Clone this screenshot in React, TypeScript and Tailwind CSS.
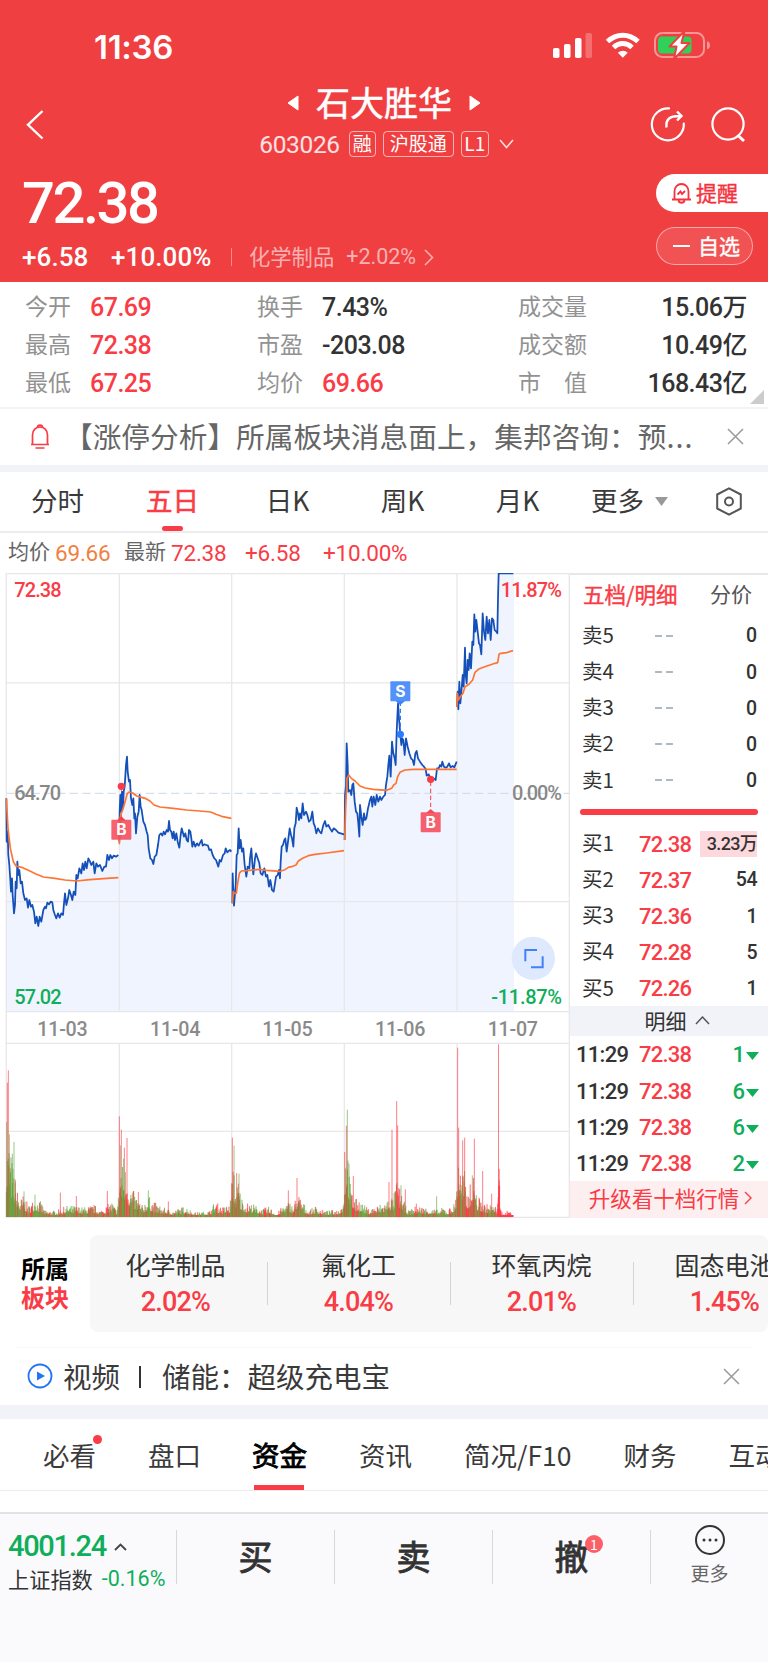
import React from 'react'
import clsx from 'clsx'

type Point = [number, number]

const numFont = "font-['Roboto','Noto_Sans_CJK_SC',sans-serif]"

const stats = [
  [
    { label: '今开', value: '67.69', up: true },
    { label: '最高', value: '72.38', up: true },
    { label: '最低', value: '67.25', up: true },
  ],
  [
    { label: '换手', value: '7.43%', up: false },
    { label: '市盈', value: '-203.08', up: false },
    { label: '均价', value: '69.66', up: true },
  ],
  [
    { label: '成交量', value: '15.06', unit: '万', up: false },
    { label: '成交额', value: '10.49', unit: '亿', up: false },
    { label: '市　值', value: '168.43', unit: '亿', up: false },
  ],
]

const periods = ['分时', '五日', '日K', '周K', '月K']

const asks = ['卖5', '卖4', '卖3', '卖2', '卖1']

const bids = [
  { label: '买1', price: '72.38', volume: '3.23万' },
  { label: '买2', price: '72.37', volume: '54' },
  { label: '买3', price: '72.36', volume: '1' },
  { label: '买4', price: '72.28', volume: '5' },
  { label: '买5', price: '72.26', volume: '1' },
]

const ticks = [1, 6, 6, 2]

const sectors = [
  { name: '化学制品', change: '2.02%' },
  { name: '氟化工', change: '4.04%' },
  { name: '环氧丙烷', change: '2.01%' },
  { name: '固态电池', change: '1.45%' },
]

const sections = ['必看', '盘口', '资金', '资讯', '简况/F10', '财务', '互动']

// Chart series, one string per trading day, in thirds of a pixel
const priceLines = [
  '19,700 20,830 23,800 25,870 28,900 31,945 33,980 36,940 38,990 42,1045 45,1020 47,950 50,970 52,890 55,930 58,915 62,955 66,950 70,985 75,1005 80,1000 84,1028 88,1005 93,1025 97,1020 102,1040 106,1075 110,1055 115,1083 119,1055 124,1070 130,1035 135,1025 138,1030 142,1013 147,1018 152,1010 157,1012 160,1035 165,1050 169,1060 174,1045 179,1058 184,1045 189,1050 192,1015 195,985 199,1020 204,1000 208,975 213,990 217,1005 221,980 226,990 229,930 233,940 238,910 244,925 248,895 252,915 256,890 260,910 265,880 270,890 274,900 280,890 284,925 289,895 294,905 300,900 307,918 313,905 318,905 322,870 327,885 331,870 336,880 341,872 348,875 355,870',
  '358,830 359,740 361,690 363,740 366,680 369,730 371,680 374,665 378,600 381,575 383,620 387,650 390,645 393,700 397,720 400,700 403,760 405,745 408,805 412,755 416,740 419,690 422,725 425,735 430,770 435,780 440,800 443,810 446,850 451,880 456,885 460,897 464,875 469,870 474,840 478,810 483,805 487,812 491,800 495,808 500,795 504,800 507,768 510,795 514,800 518,820 521,800 525,825 529,805 533,830 538,848 542,810 545,790 548,800 552,815 556,805 560,825 564,830 567,795 571,800 574,820 577,845 581,830 586,845 591,835 596,842 602,830 605,825 608,842 613,838 619,840 624,842 628,855 633,853 638,870 643,880 648,885 655,905 659,885 663,890 669,870 674,865 677,850 682,862 686,858 690,855 694,860',
  '697,1015 698,925 700,980 702,1022 705,985 707,960 710,870 713,865 716,790 719,850 722,825 726,860 730,850 734,900 739,935 743,905 748,910 750,880 754,850 757,895 760,928 765,880 768,865 773,880 778,895 782,925 787,930 793,910 798,935 802,930 807,965 811,945 816,975 821,980 825,955 828,935 833,930 837,915 840,940 842,890 845,845 849,840 853,825 856,820 860,860 864,830 869,790 873,810 876,820 880,845 883,790 887,775 890,728 894,745 897,765 900,745 904,760 908,715 912,750 918,740 922,750 927,770 932,765 937,740 941,775 945,785 949,805 954,790 959,800 964,805 970,780 975,768 979,785 985,780 990,790 996,800 1001,790 1008,795 1015,803 1022,805 1032,808',
  '1034,825 1035,690 1038,660 1040,535 1043,600 1045,680 1050,675 1054,690 1057,660 1060,655 1064,710 1068,740 1072,745 1075,775 1078,815 1080,720 1084,755 1088,780 1092,745 1095,765 1099,760 1104,730 1110,705 1114,695 1117,725 1121,695 1126,720 1130,690 1135,710 1140,695 1144,705 1150,695 1155,690 1158,660 1162,635 1165,600 1168,572 1172,635 1176,530 1180,565 1184,580 1187,600 1190,500 1194,415 1197,460 1201,508 1204,540 1207,520 1210,525 1214,570 1218,520 1223,545 1228,565 1233,580 1238,585 1242,600 1246,565 1250,558 1254,580 1260,590 1267,600 1272,605 1277,612 1280,632 1286,628 1292,643 1300,640 1307,645 1311,610 1316,610 1320,600 1324,605 1327,590 1332,605 1337,608 1342,605 1347,595 1352,607 1358,603 1363,607 1370,590',
  '1371,425 1373,380 1375,433 1378,350 1381,415 1385,370 1388,330 1391,365 1395,248 1397,330 1400,355 1403,285 1406,315 1409,265 1413,310 1417,230 1420,240 1423,148 1426,200 1429,165 1433,200 1437,235 1440,240 1444,268 1448,145 1452,200 1456,225 1460,155 1464,205 1468,165 1472,225 1476,160 1480,165 1484,195 1489,200 1492,205 1494,100 1496,25 1540,25',
]

const averageLines = [
  '19,700 24,790 31,850 40,890 48,903 65,907 85,916 108,927 130,936 165,940 195,945 230,948 270,944 310,941 355,938',
  '358,838 360,765 362,750 368,735 374,715 382,685 388,681 398,684 410,693 425,697 438,701 450,708 462,720 480,726 520,730 560,735 600,738 632,741 648,748 665,754 694,760',
  '697,1015 700,980 703,985 709,985 713,955 718,925 724,918 740,917 780,913 800,916 840,919 855,914 865,907 875,905 888,900 895,888 908,880 925,872 945,868 980,864 1032,857',
  '1034,825 1037,730 1041,640 1046,630 1054,640 1065,648 1080,663 1095,669 1120,673 1160,676 1175,670 1181,660 1188,655 1193,635 1200,622 1215,615 1240,613 1370,613',
  '1371,425 1372,385 1375,405 1381,395 1389,385 1395,365 1407,358 1418,345 1425,322 1435,313 1450,307 1470,300 1485,295 1493,293 1497,268 1502,265 1520,263 1539,257',
]

// Turnover envelope and the single bars that stand out of it
const volumeEnvelope: Point[] = [
  [19, 250], [28, 250], [34, 190], [41, 150], [46, 110], [52, 85], [60, 55], [72, 70], [85, 35], [105, 60],
  [125, 45], [135, 20], [170, 20], [200, 35], [229, 35], [250, 30], [283, 38], [300, 20], [337, 50], [350, 20],
  [357, 90], [361, 190], [371, 150], [380, 170], [386, 110], [400, 80], [415, 60], [425, 35], [445, 65], [465, 45],
  [487, 30], [520, 20], [557, 35], [580, 15], [600, 15], [630, 20], [645, 50], [665, 30], [690, 40], [695, 120],
  [702, 160], [706, 90], [717, 110], [722, 70], [735, 45], [760, 40], [785, 25], [808, 32], [830, 10], [848, 35],
  [870, 50], [880, 30], [891, 80], [910, 45], [925, 20], [948, 35], [970, 20], [990, 20], [1015, 25], [1030, 50],
  [1036, 220], [1042, 270], [1047, 150], [1052, 90], [1068, 55], [1076, 60], [1085, 45], [1105, 25], [1130, 35], [1160, 50],
  [1168, 70], [1180, 60], [1190, 120], [1198, 90], [1204, 80], [1215, 40], [1225, 20], [1250, 35], [1280, 30], [1320, 20],
  [1330, 35], [1340, 20], [1365, 45], [1371, 120], [1376, 268], [1381, 150], [1395, 140], [1400, 75], [1410, 100], [1417, 110],
  [1424, 150], [1430, 60], [1440, 60], [1450, 45], [1460, 40], [1475, 40], [1490, 30], [1496, 200], [1501, 30], [1510, 10],
  [1525, 22], [1535, 14], [1541, 5],
]

const redBars: Point[] = [
  [22, 403], [25, 440], [46, 112], [181, 73], [229, 63], [322, 78], [358, 302], [364, 262], [373, 208], [381, 237],
  [415, 75], [505, 47], [697, 238], [710, 132], [715, 100], [865, 80], [891, 117], [1034, 195], [1039, 274], [1060, 123],
  [1167, 105], [1176, 262], [1190, 348], [1193, 275], [1216, 83], [1249, 40], [1373, 508], [1376, 268], [1388, 230],
  [1394, 238], [1423, 235], [1448, 138], [1475, 70], [1495.5, 518], [1498, 110],
]

const greenBars: Point[] = [
  [20, 285], [28, 248], [37, 190], [42, 225], [72, 77], [105, 67], [361, 215], [371, 175], [445, 80], [702, 214],
  [717, 130], [1042, 322], [1047, 160], [1203, 95], [1310, 62], [1417, 125],
]

function buildVolume() {
  let seed = 7
  const rand = () => {
    seed = (seed * 16807) % 2147483647
    return seed / 2147483647
  }
  let i = 0
  let red = ''
  let green = ''
  for (let x = 19; x < 1540; x += 1.4) {
    while (i < volumeEnvelope.length - 2 && x > volumeEnvelope[i + 1][0]) i++
    const [x0, h0] = volumeEnvelope[i]
    const [x1, h1] = volumeEnvelope[i + 1]
    const top = h0 + ((h1 - h0) * (x - x0)) / (x1 - x0)
    const r = rand()
    const h = Math.max(6, top * (0.3 + 0.7 * r * r))
    const bar = `M${x.toFixed(1)} 1956v-${h.toFixed(1)}`
    const redShare = x < 60 ? 0.2 : x > 1490 ? 1 : 0.52
    if (rand() < redShare) red += bar
    else green += bar
  }
  return { red, green }
}

const volume = buildVolume()

const bars = (points: Point[]) => points.map(([x, h]) => `M${x} 1956v-${h}`).join('')

function StatusIcons() {
  return (
    <svg width="162" height="30" viewBox="0 0 162 30" fill="none">
      <rect x="1" y="17" width="6.5" height="10" rx="1.8" fill="#fff" />
      <rect x="12" y="13" width="6.5" height="14" rx="1.8" fill="#fff" />
      <rect x="23" y="7" width="6.5" height="20" rx="1.8" fill="#fff" />
      <rect x="33.500" y="2" width="6.500" height="25" rx="1.8" fill="#fff" fillOpacity=".25" />
      <g stroke="#fff" strokeWidth="5">
        <path d="M55.5 10.5C64.5 2 77 2 86 10.500" />
        <path d="M61.500 16.500C67 11.300 74.500 11.300 80 16.500" />
      </g>
      <path d="M65.800 21.700C69 19 73 19 75.700 21.700L70.800 26.800Z" fill="#fff" />
      <rect x="103" y="2" width="49" height="24" rx="7.500" stroke="#fff" strokeOpacity=".45" strokeWidth="2" />
      <path d="M155 10.500c2.300 0 3 2 3 3.800s-.7 3.800-3 3.800z" fill="#fff" fillOpacity=".45" />
      <rect x="106" y="5.500" width="33.500" height="17" rx="4" fill="#30d158" />
      <path d="M132.500 0L117.500 15.500H124.500L122 28L137.500 12H129.500Z" fill="#fff" stroke="#f03f41" strokeWidth="2" strokeLinejoin="round" />
    </svg>
  )
}

function Header() {
  return (
    <header className="h-[282px] bg-[#f03f41] text-white">
      <div className="flex h-[84px] items-start justify-between pt-[31px] pr-[54px] pl-[94px]">
        <span className="font-['Inter',sans-serif] text-[33px] leading-[32px] font-semibold tracking-[-0.300px]">11:36</span>
        <StatusIcons />
      </div>

      <div className="grid h-[84px] grid-cols-[120px_1fr_120px]">
        <svg className="mt-[26px] ml-[26px]" width="18" height="30" viewBox="0 0 18 30" fill="none" stroke="#fff" strokeWidth="2.400">
          <path d="M16.500 1L2 14.800L16.500 28.500" />
        </svg>
        <div className="flex flex-col items-center">
          <div className="flex h-[38px] items-center gap-[17px]">
            <svg width="12" height="16" viewBox="0 0 12 16"><path d="M1 8L11 1V15Z" fill="#fff" stroke="#fff" strokeLinejoin="round" /></svg>
            <h1 className="-mt-[3px] text-[34px] leading-[38px] [-webkit-text-stroke:0.5px]">石大胜华</h1>
            <svg width="12" height="16" viewBox="0 0 12 16"><path d="M11 8L1 1V15Z" fill="#fff" stroke="#fff" strokeLinejoin="round" /></svg>
          </div>
          <div className="mt-[9px] flex h-[26px] items-center gap-[7px] pl-[5px] text-[19px] leading-[22px]">
            <span className={clsx(numFont, 'mr-[2px] pt-[2px] text-[24.500px] tracking-[-0.350px] text-white/85')}>603026</span>
            <span className="h-[26px] rounded-[4px] border border-white/60 px-[3px]">融</span>
            <span className="h-[26px] rounded-[4px] border border-white/60 px-[6px]">沪股通</span>
            <span className="h-[26px] w-[28px] rounded-[4px] border border-white/60 text-center">L1</span>
            <svg className="ml-[3px]" width="15" height="10" viewBox="0 0 15 10" fill="none" stroke="#fff" strokeOpacity=".85" strokeWidth="1.500"><path d="M1 1L7.500 8.500L14 1" /></svg>
          </div>
        </div>
        <div className="flex pt-[22px] pl-[1px]">
          <svg width="38" height="38" viewBox="0 0 38 38" fill="none" stroke="#fff" strokeWidth="2.200">
            <path d="M20 2.400A16 16 0 1 0 34.800 17.500" strokeLinecap="round" />
            <path d="M17.500 21.500C16.500 13 21 9.700 31 10M28 5.500L32.500 10L28 14.500" strokeWidth="2.400" />
          </svg>
          <svg className="ml-[24px]" width="36" height="38" viewBox="0 0 36 38" fill="none" stroke="#fff" strokeWidth="2.200">
            <circle cx="17" cy="18" r="15.600" />
            <path d="M26.500 29L33 35" strokeWidth="3" />
          </svg>
        </div>
      </div>

      <div className="flex justify-between">
        <div className="pt-[6px] pl-[22px]">
          <div className={clsx(numFont, 'text-[58px] leading-[58px] font-medium tracking-[-2.500px]')}>72.38</div>
          <div className={clsx(numFont, 'mt-[10px] flex h-[30px] items-center text-[26px] font-medium')}>
            <span className="w-[89px] tracking-[0.100px]">+6.58</span>
            <span className="w-[120px] tracking-[0.100px]">+10.00%</span>
            <span className="h-[18px] w-px bg-white/40" />
            <span className="-mt-[3px] ml-[17px] font-['Noto_Sans_CJK_SC',sans-serif] text-[21.300px] font-normal text-white/60">化学制品</span>
            <span className="ml-[12px] text-[21.500px] font-normal text-white/60">+2.02%</span>
            <svg className="ml-[8px]" width="10" height="17" viewBox="0 0 10 17" fill="none" stroke="#fff" strokeOpacity=".6" strokeWidth="1.500"><path d="M1 1L8.500 8.500L1 16" /></svg>
          </div>
        </div>
        <div className="flex w-[112px] flex-col pt-[6px] text-[21px] leading-[34px]">
          <div className="flex h-[38px] items-center rounded-l-full bg-white pl-[15px] text-[#f5333f] [-webkit-text-stroke:0.400px]">
            <svg className="mr-[4px]" width="21" height="22" viewBox="0 0 21 22" fill="none" stroke="#f5333f" strokeWidth="1.800">
              <path d="M1 17.500H20M3.500 17V9.500C3.500 5 6.500 2 10.500 2S17.500 5 17.500 9.500V17M7.500 18.500C8 21.500 13 21.500 13.500 18.500" />
              <path d="M6.500 12.500L9.500 9.500L11 12L14 9" />
            </svg>
            <span className="-mt-[2px]">提醒</span>
          </div>
          <div className="mt-[15px] flex h-[38px] w-[97px] items-center rounded-full border border-white/50 bg-white/10 pl-[16px] [-webkit-text-stroke:0.400px]">
            <span className="mr-[8px] h-[2px] w-[17px] bg-white" />
            <span className="-mt-[2px]">自选</span>
          </div>
        </div>
      </div>
    </header>
  )
}

function Stats() {
  const columns = ['w-[231px] pl-[25px]', 'w-[261px] pl-[26px]', 'w-[276px] pl-[26px]']
  const labels = ['w-[65px]', 'w-[65px]', 'flex-1']
  return (
    <section className="relative flex h-[127px] border-b-2 border-[#f4f4f6] pt-[6px]">
      {stats.map((column, c) => (
        <div key={c} className={columns[c]}>
          {column.map((item) => (
            <div key={item.label} className={clsx('flex h-[38px] items-center', c === 2 && 'pr-[21px]')}>
              <span className={clsx(labels[c], '-mt-[4px] text-[23px] text-[#929292]')}>{item.label}</span>
              <span
                className={clsx(
                  numFont,
                  'pt-[2px] text-[25px] font-medium tracking-[-0.500px]',
                  item.up ? 'text-[#f93c45]' : 'text-[#333]',
                )}
              >
                {item.value}
                {'unit' in item && item.unit}
              </span>
            </div>
          ))}
        </div>
      ))}
      <svg className="absolute right-[4px] bottom-[3px]" width="14" height="14"><path d="M14 0V14H0Z" fill="#ccc" /></svg>
    </section>
  )
}

function CloseIcon() {
  return (
    <svg width="17" height="17" viewBox="0 0 17 17" stroke="#999" strokeWidth="1.500"><path d="M1 1L16 16M16 1L1 16" /></svg>
  )
}

function Notice() {
  return (
    <section className="flex h-[56px] items-center pl-[30px] text-[#666]">
      <svg className="-mt-[2px]" width="20" height="25" viewBox="0 0 20 25" fill="none" stroke="#f93c45" strokeWidth="1.700">
        <path d="M1 20.500H19M2.500 20V11C2.500 6 6 3 10 3S17.500 6 17.500 11V20M7.500 3.200C7.500 .3 12.500 .3 12.500 3.200M5.500 24H14.500" />
      </svg>
      <span className="-mt-[2px] ml-[14px] w-[643px] overflow-hidden text-[28.700px] whitespace-nowrap">
        【涨停分析】所属板块消息面上，集邦咨询：预<span className="tracking-[1px]">...</span>
      </span>
      <span className="-mt-[2px] ml-[20px]"><CloseIcon /></span>
    </section>
  )
}

function PeriodTabs() {
  return (
    <nav className="flex h-[61px] items-center border-b-2 border-[#ececee] text-[26.500px] text-[#3a3a3a]">
      {periods.map((p, i) => (
        <div
          key={p}
          className={clsx(
            'relative flex h-full w-[115px] items-center justify-center pb-[3px]',
            i === 1 && 'text-[#f93c45] [-webkit-text-stroke:0.500px]',
          )}
        >
          {p}
          {i === 1 && <span className="absolute bottom-0 h-[5px] w-[21px] rounded-full bg-[#f93c45]" />}
        </div>
      ))}
      <span className="ml-[16px] pb-[3px]">更多</span>
      <svg className="ml-[11px]" width="13" height="9"><path d="M0 0H13L6.500 9Z" fill="#999" /></svg>
      <svg className="ml-[48px]" width="26" height="29" viewBox="0 0 26 29" fill="none" stroke="#555" strokeWidth="2">
        <path d="M13 1.300L24.800 7.500V21.500L13 27.700L1.200 21.500V7.500Z" strokeLinejoin="round" />
        <circle cx="13" cy="14.500" r="4" />
      </svg>
    </nav>
  )
}

function Legend() {
  return (
    <div className={clsx(numFont, 'flex h-[40px] items-center pt-[2px] pl-[8px] text-[22.500px] tracking-[-0.200px] text-[#f93c45]')}>
      <span className="-mt-[2px] text-[21px] tracking-normal text-[#666]">均价</span>
      <span className="ml-[5px] w-[69px] text-[#ee8143]">69.66</span>
      <span className="-mt-[2px] text-[21px] tracking-normal text-[#666]">最新</span>
      <span className="ml-[5px] w-[74px]">72.38</span>
      <span className="w-[78px]">+6.58</span>
      <span>+10.00%</span>
    </div>
  )
}

function Marker({ x, y, label, color }: { x: number; y: number; label: string; color: string }) {
  return (
    <>
      <rect x={x - 30} y={y - 30} width="60" height="60" rx="3" fill={color} fillOpacity=".88" />
      <text x={x} y={y + 17} textAnchor="middle" fontSize="47" fontWeight="700" fill="#fff" className="font-['Inter',sans-serif]">
        {label}
      </text>
    </>
  )
}

function Chart() {
  const days = [116, 454, 791, 1129, 1467]
  return (
    <svg width="570" height="645" viewBox="0 24 1710 1935" fill="none" className="block shrink-0 font-['Roboto',sans-serif]">
      {priceLines.map((line, i) => {
        const pts = line.split(' ')
        const first = i === 0 ? '19' : pts[0].split(',')[0]
        const last = [357, 695, 1033, 1371, 1542][i]
        return <path key={i} d={`M${first} 1340L${pts.join('L')}H${last}V1340Z`} fill="#eff4ff" />
      })}
      <g stroke="#e8e8ea" strokeWidth="4">
        <path d="M17 26H1710M17 353.500H1710M17 1010H1710M17 1340H1710M17 1435H1710M17 1699H1710M17 1957H1710" />
        <path d="M19 24V1959M1708 24V1959M358 24V1340M695 24V1340M1033 24V1340M1371 24V1340M358 1435V1959M695 1435V1959M1033 1435V1959M1371 1435V1959" />
      </g>
      <path d="M19 685H1708" stroke="#cbd9e6" strokeWidth="3" strokeDasharray="25 13" />
      <path d={`${volume.red}`} stroke="#ff1f2d" strokeOpacity=".85" strokeWidth="2.400" />
      <path d={`${volume.green}`} stroke="#4f9e26" strokeOpacity=".85" strokeWidth="2.400" />
      <path d={bars(redBars)} stroke="#ff3a45" strokeOpacity=".65" strokeWidth="3" />
      <path d={bars(greenBars)} stroke="#5a9f38" strokeOpacity=".6" strokeWidth="3" />

      <path d="M364 664V760" stroke="#f93c45" strokeWidth="3" strokeDasharray="13 8" />
      {priceLines.map((line, i) => (
        <polyline key={i} points={line} stroke="#1450b8" strokeWidth="5.300" strokeLinejoin="round" />
      ))}
      {averageLines.map((line, i) => (
        <polyline key={i} points={line} stroke="#ff7433" strokeWidth="5" strokeLinejoin="round" />
      ))}

      {/* Trade markers */}
      <circle cx="364" cy="664" r="11" fill="#f93c45" />
      <path d="M350 767L364 754L378 767Z" fill="#f93c45" />
      <Marker x={364} y={794} label="B" color="#f54b59" />
      <path d="M1201 410V500" stroke="#2b7bff" strokeWidth="4" strokeDasharray="13 8" />
      <circle cx="1201" cy="508" r="11" fill="#2b7bff" />
      <path d="M1187 408L1201 420L1215 408Z" fill="#3b82fb" />
      <Marker x={1201} y={379} label="S" color="#3b82fb" />
      <path d="M1292 650V730" stroke="#f93c45" strokeWidth="3" strokeDasharray="13 8" />
      <circle cx="1292" cy="643" r="11" fill="#f93c45" />
      <path d="M1278 744L1292 732L1306 744Z" fill="#f54b59" />
      <Marker x={1292} y={772} label="B" color="#f54b59" />

      <circle cx="1600" cy="1180" r="65" fill="#dfe9fd" />
      <path d="M1611 1155H1576V1189M1628 1174V1207H1593" stroke="#4080f8" strokeWidth="6" />

      <g fontSize="60" fontWeight="500">
        <text x="43" y="95" textLength="142" fill="#f93c45">72.38</text>
        <text x="43" y="706" textLength="140" fill="#888">64.70</text>
        <text x="43" y="1316" textLength="142" fill="#0fae5b">57.02</text>
        <text x="1502" y="95" textLength="184" fill="#f93c45">11.87%</text>
        <text x="1536" y="706" textLength="150" fill="#888">0.00%</text>
        <text x="1474" y="1316" textLength="212" fill="#0fae5b">-11.87%</text>
      </g>
      <g fontSize="59" fontWeight="500" fill="#8a8a8a">
        {days.map((x, i) => (
          <text key={x} x={x - 4} y={1412} textLength="151">11-0{i + 3}</text>
        ))}
      </g>
    </svg>
  )
}

function OrderBook() {
  return (
    <aside className={clsx(numFont, 'flex-1 text-[22px] text-[#333]')}>
      <div className="flex h-[45px] items-center justify-between border-t-2 border-[#e8e8ea] pr-[16px] pb-[5px] pl-[13px] font-['Noto_Sans_CJK_SC',sans-serif] text-[21.500px]">
        <span className="text-[#f93c45] [-webkit-text-stroke:0.400px]">五档/明细</span>
        <span className="text-[21px] text-[#555]">分价</span>
      </div>
      {asks.map((label) => (
        <div key={label} className="flex h-[36.100px] items-center pr-[11px] pl-[12px]">
          <span className="-mt-[3px] w-[73px] font-['Noto_Sans_CJK_SC',sans-serif] text-[20.500px]">{label}</span>
          <span className="h-[2px] w-[7px] bg-[#b0b8c0]" />
          <span className="ml-[4px] h-[2px] w-[7px] bg-[#b0b8c0]" />
          <span className="ml-auto text-[19.500px] font-medium">0</span>
        </div>
      ))}
      <div className="flex h-[27.500px] items-center pr-[10px] pl-[10px]">
        <div className="h-[6px] w-full rounded-full bg-[#f93c45]" />
      </div>
      {bids.map((bid, i) => (
        <div key={bid.label} className="flex h-[36.100px] items-center pr-[11px] pl-[12px]">
          <span className="-mt-[3px] w-[57px] font-['Noto_Sans_CJK_SC',sans-serif] text-[20.500px]">{bid.label}</span>
          <span className="font-medium tracking-[-0.800px] text-[#f93c45]">{bid.price}</span>
          <span
            className={clsx(
              'ml-auto font-medium',
              i === 0
                ? 'h-[26px] w-[57px] bg-[#fdd8dc] text-right text-[18px] leading-[25px] tracking-[-0.700px]'
                : 'text-[19.500px] tracking-[-0.500px]',
            )}
          >
            {bid.volume}
          </span>
        </div>
      ))}
      <div className="flex h-[30px] items-center justify-center gap-[8px] bg-[#f2f3f9] pb-[1px] pl-[16px] font-['Noto_Sans_CJK_SC',sans-serif] text-[21px]">
        明细
        <svg width="15" height="9" viewBox="0 0 15 9" fill="none" stroke="#555" strokeWidth="1.500"><path d="M1 8L7.500 1L14 8" /></svg>
      </div>
      {ticks.map((n, i) => (
        <div key={i} className="flex h-[36.100px] items-center pt-[1px] pr-[9px] pl-[6px] font-medium">
          <span className="w-[63px] tracking-[-0.700px]">11:29</span>
          <span className="tracking-[-0.800px] text-[#f93c45]">72.38</span>
          <span className="ml-auto text-[#0fae5b]">{n}</span>
          <svg className="mt-[3px] ml-[1px]" width="13" height="8"><path d="M0 0H13L6.500 8Z" fill="#0fae5b" /></svg>
        </div>
      ))}
      <div className="flex h-[37px] items-center justify-center gap-[5px] bg-[#fdeef0] pb-[2px] pl-[3px] font-['Noto_Sans_CJK_SC',sans-serif] text-[21.500px] text-[#f93c45]">
        升级看十档行情
        <svg width="8" height="14" viewBox="0 0 8 14" fill="none" stroke="#f93c45" strokeWidth="1.400"><path d="M1 1L7 7L1 13" /></svg>
      </div>
    </aside>
  )
}

function Sectors() {
  return (
    <section className="flex h-[129px] pt-[17px]">
      <div className="flex h-[95px] w-[90px] flex-col justify-center text-center text-[24px] leading-[28.500px] font-bold">
        <span className="text-black">所属</span>
        <span className="text-[#f93c45]">板块</span>
      </div>
      <div className="h-[97px] flex-1 overflow-hidden rounded-[8px] bg-[#f7f7f7]">
        <div className="-ml-[6px] flex w-[732px]">
          {sectors.map((s) => (
            <div key={s.name} className="flex h-[97px] w-[183px] items-center">
              <div className="flex flex-1 flex-col items-center">
                <span className="text-[25px] leading-[36px] text-[#333]">{s.name}</span>
                <span className={clsx(numFont, 'pt-[2px] text-[27px] leading-[37px] font-medium tracking-[-0.800px] text-[#f93c45]')}>{s.change}</span>
              </div>
              <span className="-mr-px h-[43px] w-px bg-[#d4d4d4]" />
            </div>
          ))}
        </div>
      </div>
    </section>
  )
}

function VideoRow() {
  return (
    <section className="mx-[16px] flex h-[58px] items-center border-t border-[#f7f7f7] pl-[11px] text-[28.500px] text-[#3a3a3a]">
      <svg className="-mt-px" width="26" height="26" viewBox="0 0 26 26" fill="none"><circle cx="13" cy="13" r="11.500" stroke="#2474f6" strokeWidth="1.800" /><path d="M10 8.500L18 13L10 17.500Z" fill="#2474f6" /></svg>
      <span className="ml-[10px]">视频</span>
      <span className="ml-[19px] h-[22px] w-[2px] bg-[#333]" />
      <span className="ml-[21px]">储能：超级充电宝</span>
      <span className="mr-[12px] ml-auto -mt-px"><CloseIcon /></span>
    </section>
  )
}

function SectionTabs() {
  return (
    <nav className="flex h-[72px] gap-[52px] overflow-hidden border-b border-[#ececee] pl-[43px] text-[26.500px] whitespace-nowrap text-[#3a3a3a]">
      {sections.map((s, i) => (
        <div
          key={s}
          className={clsx('relative flex h-full items-center', i === 2 && '-ml-[1px] text-[27.500px] text-black [-webkit-text-stroke:0.900px]')}
        >
          {s}
          {i === 0 && <span className="absolute top-[16px] -right-[6px] h-[9px] w-[9px] rounded-full bg-[#f93c45]" />}
          {i === 2 && <span className="absolute bottom-0 left-[2px] h-[5px] w-[50px] bg-[#f93c45]" />}
        </div>
      ))}
    </nav>
  )
}

function BottomBar() {
  return (
    <footer className="flex h-[150px] border-t-2 border-[#e2e2e5] bg-[#fafafd] pt-[16px] text-[#333]">
      <div className="h-[54px] w-[176px] pl-[8px]">
        <div className={clsx(numFont, 'flex h-[34px] items-center gap-[8px] text-[29px] font-medium tracking-[-1.300px] text-[#0fae5b]')}>
          4001.24
          <svg width="13" height="8" viewBox="0 0 13 8" fill="none" stroke="#444" strokeWidth="1.800"><path d="M1 7L6.500 1.500L12 7" /></svg>
        </div>
        <div className="flex h-[30px] items-center gap-[9px] text-[21.200px]">
          上证指数
          <span className={clsx(numFont, 'pt-px text-[21.500px] text-[#0fae5b]')}>-0.16%</span>
        </div>
      </div>
      {['买', '卖', '撤'].map((action, i) => (
        <div
          key={action}
          className="relative flex h-[54px] w-[158px] items-center justify-center border-l border-[#d8d8db] pb-[4px] text-[34px] [-webkit-text-stroke:0.900px]"
        >
          {action}
          {i === 2 && (
            <span className="absolute top-[5px] left-[92px] flex h-[18px] w-[18px] items-center justify-center rounded-full bg-[#fb5f68] text-[14px] leading-none text-white [-webkit-text-stroke:0]">
              1
            </span>
          )}
        </div>
      ))}
      <div className="flex h-[54px] flex-1 flex-col items-center border-l border-[#d8d8db] text-[19px] text-[#666]">
        <svg className="-mt-[5px] shrink-0" width="30" height="30" viewBox="0 0 30 30">
          <circle cx="15" cy="15" r="14" fill="none" stroke="#333" strokeWidth="2" />
          <circle cx="9" cy="15" r="1.500" fill="#333" />
          <circle cx="15" cy="15" r="1.500" fill="#333" />
          <circle cx="21" cy="15" r="1.500" fill="#333" />
        </svg>
        <span className="mt-[4px]">更多</span>
      </div>
    </footer>
  )
}

export default function App() {
  return (
    <div className="h-[1662px] w-[768px] overflow-hidden bg-white font-['Noto_Sans_CJK_SC',sans-serif]">
      <Header />
      <Stats />
      <Notice />
      <div className="h-[7px] bg-[#f2f3f9]" />
      <PeriodTabs />
      <Legend />
      <div className="flex h-[645px]">
        <Chart />
        <OrderBook />
      </div>
      <Sectors />
      <VideoRow />
      <div className="h-[14px] bg-[#f2f3f9]" />
      <SectionTabs />
      <div className="h-[21px]" />
      <BottomBar />
    </div>
  )
}
